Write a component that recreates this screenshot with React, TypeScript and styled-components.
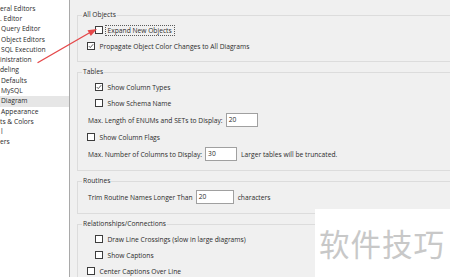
import React from "react";
import styled, { createGlobalStyle } from "styled-components";

const Global = createGlobalStyle`
  html, body { margin: 0; padding: 0; background: #f0f0f0; }
  body { font-family: "Open Sans", "Noto Sans", sans-serif; }
`;

const Window = styled.div`
  position: relative;
  display: flex;
  width: 450px;
  height: 277px;
  overflow: hidden;
  background: #f0f0f0;
  font-family: "Open Sans", "Noto Sans", sans-serif;
  font-size: 6.7px;
  color: #2b2b2b;
`;

const Tree = styled.ul`
  flex: none;
  width: 69px;
  margin: 0;
  padding: 3.9px 0 0;
  list-style: none;
  background: #ffffff;
  border-right: 1px solid #a9a9a9;
  overflow: hidden;
`;

const TreeItem = styled.li<{ $level: number; $selected?: boolean }>`
  height: 10.28px;
  line-height: 10.28px;
  white-space: nowrap;
  padding-left: ${(p) => (p.$level === 0 ? 0 : 1)}px;
  background: ${(p) => (p.$selected ? "#e6e6e6" : "transparent")};
`;

const Main = styled.div`
  flex: 1;
  min-width: 0;
  display: flex;
  flex-direction: column;
  gap: 5px;
  padding: 10px 0 0 7px;
  overflow: hidden;
`;

const Group = styled.fieldset`
  flex: none;
  width: 420px;
  min-width: 0;
  margin: 0;
  padding: 2px 0 7px 4px;
  border: 1px solid #dcdcdc;
`;

const Legend = styled.legend`
  padding: 0 1px;
  height: 10px;
  line-height: 10px;
`;

const Row = styled.div<{ $indent: number; $tall?: boolean }>`
  display: flex;
  align-items: center;
  height: ${(p) => (p.$tall ? 18 : 16)}px;
  margin-left: ${(p) => p.$indent}px;
  white-space: nowrap;
`;

const Box = styled.span`
  flex: none;
  box-sizing: border-box;
  width: 8px;
  height: 8px;
  margin-right: 4.5px;
  border: 1px solid #3d3d3d;
  background: #ffffff;
  display: inline-flex;
  align-items: center;
  justify-content: center;
`;

const Focused = styled.span`
  outline: 1px dotted #5a5a5a;
  outline-offset: 0;
  padding: 0 2px;
  margin-left: -2px;
  line-height: 9px;
`;

const Field = styled.span<{ $w: number }>`
  flex: none;
  box-sizing: border-box;
  width: ${(p) => p.$w}px;
  height: 14px;
  margin: 0 4px 0 3px;
  padding-left: 2px;
  line-height: 12px;
  border: 1px solid #a0a0a0;
  background: #ffffff;
`;

const Watermark = styled.div`
  position: absolute;
  right: 0;
  bottom: 0;
  width: 135px;
  height: 68px;
  background: #ffffff;
  display: flex;
  align-items: center;
  justify-content: flex-start;
  padding-left: 4px;
  box-sizing: border-box;
  font-family: "Noto Sans CJK SC", "Noto Sans", sans-serif;
  font-size: 30.5px;
  letter-spacing: 1px;
  color: #c8c8c8;
`;

const Arrow = styled.svg`
  position: absolute;
  left: 0;
  top: 0;
  pointer-events: none;
`;

const Check: React.FC<{ checked?: boolean }> = ({ checked }) => (
  <Box>
    {checked && (
      <svg width="6" height="6" viewBox="0 0 6 6">
        <path d="M0.8 3.1 L2.3 4.6 L5.2 1.2" fill="none" stroke="#4a4a4a" strokeWidth="0.9" />
      </svg>
    )}
  </Box>
);

const tree: { label: string; level: number; selected?: boolean }[] = [
  { label: "eral Editors", level: 0 },
  { label: ". Editor", level: 0 },
  { label: "Query Editor", level: 1 },
  { label: "Object Editors", level: 1 },
  { label: "SQL Execution", level: 1 },
  { label: "inistration", level: 0 },
  { label: "deling", level: 0 },
  { label: "Defaults", level: 1 },
  { label: "MySQL", level: 1 },
  { label: "Diagram", level: 1, selected: true },
  { label: "Appearance", level: 1 },
  { label: "ts & Colors", level: 0 },
  { label: "l", level: 1 },
  { label: "ers", level: 0 },
];

export default function App() {
  return (
    <>
      <Global />
      <Window>
        <Tree>
          {tree.map((t) => (
            <TreeItem key={t.label} $level={t.level} $selected={t.selected}>
              {t.label}
            </TreeItem>
          ))}
        </Tree>
        <Main>
          <Group>
            <Legend>All Objects</Legend>
            <Row $indent={13}>
              <Check />
              <Focused>Expand New Objects</Focused>
            </Row>
            <Row $indent={5}>
              <Check checked />
              Propagate Object Color Changes to All Diagrams
            </Row>
          </Group>
          <Group>
            <Legend>Tables</Legend>
            <Row $indent={13}>
              <Check checked />
              Show Column Types
            </Row>
            <Row $indent={13}>
              <Check />
              Show Schema Name
            </Row>
            <Row $indent={6} $tall>
              Max. Length of ENUMs and SETs to Display:
              <Field $w={32}>20</Field>
            </Row>
            <Row $indent={5}>
              <Check />
              Show Column Flags
            </Row>
            <Row $indent={6} $tall>
              Max. Number of Columns to Display:
              <Field $w={32}>30</Field>
              Larger tables will be truncated.
            </Row>
          </Group>
          <Group>
            <Legend>Routines</Legend>
            <Row $indent={6} $tall>
              Trim Routine Names Longer Than
              <Field $w={38}>20</Field>
              characters
            </Row>
          </Group>
          <Group>
            <Legend>Relationships/Connections</Legend>
            <Row $indent={13}>
              <Check />
              Draw Line Crossings (slow in large diagrams)
            </Row>
            <Row $indent={13}>
              <Check />
              Show Captions
            </Row>
            <Row $indent={5}>
              <Check />
              Center Captions Over Line
            </Row>
          </Group>
        </Main>
        <Arrow width="450" height="277" viewBox="0 0 450 277">
          <line x1="38" y1="62.5" x2="90" y2="32.5" stroke="#e5484a" strokeWidth="1.4" strokeLinecap="round" />
          <polygon points="97,29 87.5,30.2 90.8,36" fill="#e5484a" />
        </Arrow>
        <Watermark>软件技巧</Watermark>
      </Window>
    </>
  );
}
